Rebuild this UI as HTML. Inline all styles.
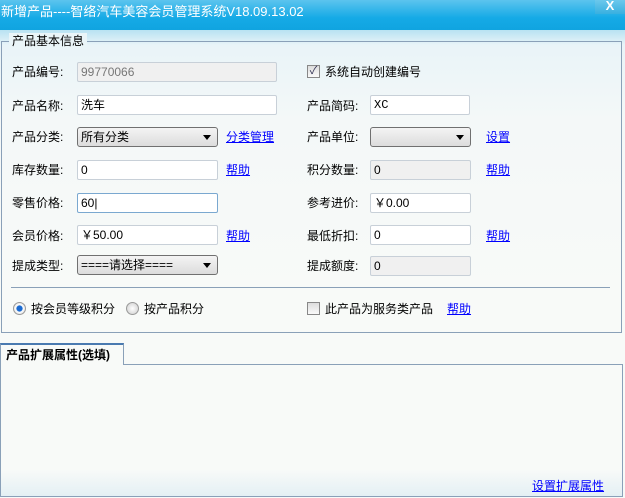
<!DOCTYPE html>
<html><head><meta charset="utf-8"><style>
*{box-sizing:border-box;margin:0;padding:0}
body{width:625px;height:498px;position:relative;overflow:hidden;font:12px "Liberation Sans","Noto Sans CJK SC",sans-serif;color:#000;background:linear-gradient(#b8e2f2 30px,#e9f4f8 45px,#f4f8f8 120px,#f8faf8 300px)}
.t{position:absolute;white-space:nowrap;line-height:14px}
.title{position:absolute;left:0;top:0;width:625px;height:30px;background:linear-gradient(#5cc4ee,#15aae6 60%,#10a4e0);color:#fff;font-size:13px;line-height:24px;padding-left:1px}
.x{position:absolute;right:0;top:0;width:30px;height:14px;background:linear-gradient(#6cc8ec,#38b0e0);color:#fff;font-size:13px;line-height:12px;text-align:center;font-weight:bold}
.grp{position:absolute;left:1px;top:41px;width:621px;height:292px;border:1px solid #8aa0b8}
.leg{position:absolute;left:9px;top:33px;background:#eaf5f8;padding:0 3px;font-size:12px;line-height:16px}
.in{position:absolute;height:20px;background:#fff;border:1px solid #c8d0d8;border-radius:2px;padding:3px 0 0 3px;line-height:13px}
.dis{background:#f0f0f0;color:#777}
.sel{position:absolute;height:20px;border:1px solid #707070;border-radius:3px;background:linear-gradient(#f4f4f4,#dcdcdc);padding:2px 0 0 3px;line-height:14px}
.sel:after{content:"";position:absolute;right:6px;top:7px;border:4px solid transparent;border-top:5px solid #000;border-bottom:0}
a{color:#00f;text-decoration:underline;position:absolute;white-space:nowrap;line-height:14px}
.cb{position:absolute;width:13px;height:13px;border:1px solid #888;background:linear-gradient(#ddd,#fafafa)}
.rb{position:absolute;width:13px;height:13px;border-radius:50%;border:1px solid #999;background:radial-gradient(#fff,#ccc)}
</style></head><body>
<div class="title">新增产品----智络汽车美容会员管理系统V18.09.13.02</div>
<div class="x">X</div>
<div class="grp"></div>
<div class="leg">产品基本信息</div>

<div class="t" style="left:12px;top:65px">产品编号:</div>
<div class="in dis" style="left:77px;top:62px;width:200px">99770066</div>
<div class="cb" style="left:307px;top:65px;font-size:11px;line-height:11px;color:#335;text-align:center">✓</div>
<div class="t" style="left:325px;top:65px">系统自动创建编号</div>

<div class="t" style="left:12px;top:99px">产品名称:</div>
<div class="in" style="left:77px;top:95px;width:200px">洗车</div>
<div class="t" style="left:307px;top:99px">产品简码:</div>
<div class="in" style="left:370px;top:95px;width:100px;font-family:'Liberation Mono',monospace">XC</div>

<div class="t" style="left:12px;top:130px">产品分类:</div>
<div class="sel" style="left:77px;top:127px;width:141px">所有分类</div>
<a style="left:226px;top:130px">分类管理</a>
<div class="t" style="left:307px;top:130px">产品单位:</div>
<div class="sel" style="left:370px;top:127px;width:101px"></div>
<a style="left:486px;top:130px">设置</a>

<div class="t" style="left:12px;top:163px">库存数量:</div>
<div class="in" style="left:77px;top:160px;width:141px">0</div>
<a style="left:226px;top:163px">帮助</a>
<div class="t" style="left:307px;top:163px">积分数量:</div>
<div class="in dis" style="left:370px;top:160px;width:101px;color:#000">0</div>
<a style="left:486px;top:163px">帮助</a>

<div class="t" style="left:12px;top:196px">零售价格:</div>
<div class="in" style="left:77px;top:193px;width:141px;border-color:#7aa8d0">60|</div>
<div class="t" style="left:307px;top:196px">参考进价:</div>
<div class="in" style="left:370px;top:193px;width:101px">￥0.00</div>

<div class="t" style="left:12px;top:229px">会员价格:</div>
<div class="in" style="left:77px;top:225px;width:141px">￥50.00</div>
<a style="left:226px;top:229px">帮助</a>
<div class="t" style="left:307px;top:229px">最低折扣:</div>
<div class="in" style="left:370px;top:225px;width:101px">0</div>
<a style="left:486px;top:229px">帮助</a>

<div class="t" style="left:12px;top:259px">提成类型:</div>
<div class="sel" style="left:77px;top:255px;width:141px">====请选择====</div>
<div class="t" style="left:307px;top:259px">提成额度:</div>
<div class="in dis" style="left:370px;top:256px;width:101px;color:#000">0</div>

<div style="position:absolute;left:11px;top:287px;width:599px;height:1px;background:#8aa0b8"></div>

<div class="rb" style="left:13px;top:302px;background:radial-gradient(#1a6ad0 35%,#fff 45%,#ccc)"></div>
<div class="t" style="left:31px;top:302px">按会员等级积分</div>
<div class="rb" style="left:126px;top:302px"></div>
<div class="t" style="left:144px;top:302px">按产品积分</div>
<div class="cb" style="left:307px;top:302px"></div>
<div class="t" style="left:325px;top:302px">此产品为服务类产品</div>
<a style="left:447px;top:302px">帮助</a>

<div style="position:absolute;left:0;top:364px;width:623px;height:133px;border:1px solid #8aa0b8;border-top-color:#8aa0b8;background:linear-gradient(#f8faf8 80%,#e4f0f4)"></div>
<div style="position:absolute;left:0;top:343px;width:124px;height:22px;border:1px solid #8aa0b8;border-top:2px solid #4a7ab0;border-bottom:none;background:#f8faf8;font-weight:bold;padding:3px 0 0 5px;line-height:14px">产品扩展属性(选填)</div>
<a style="left:532px;top:479px">设置扩展属性</a>
</body></html>
